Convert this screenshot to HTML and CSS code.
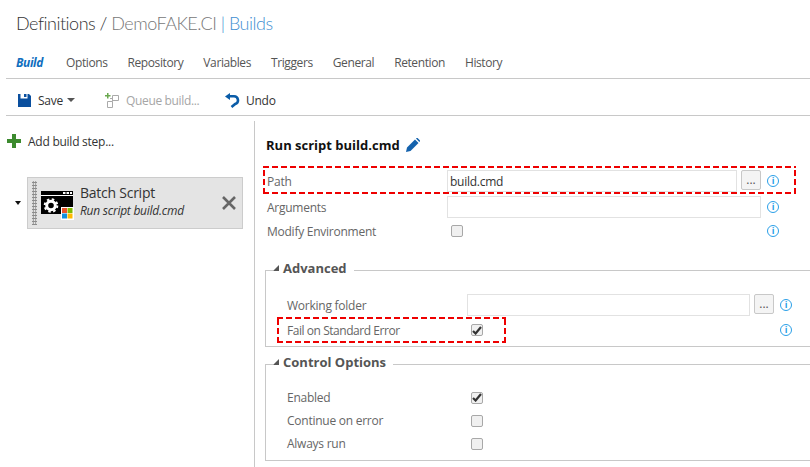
FILE: index.html
```html
<!DOCTYPE html>
<html>
<head>
<meta charset="utf-8">
<title>Builds</title>
<link rel="stylesheet" href="styles.css">
</head>
<body>
<h1 class="title">Definitions / <span class="crumb">DemoFAKE.CI</span> <span class="hub">| Builds</span></h1>
<div class="tabs">
  <a class="tab active">Build</a>
  <a class="tab">Options</a>
  <a class="tab">Repository</a>
  <a class="tab">Variables</a>
  <a class="tab">Triggers</a>
  <a class="tab">General</a>
  <a class="tab">Retention</a>
  <a class="tab">History</a>
</div>
<div class="toolbar">
  <span class="tool save">
    <svg width="13" height="13" viewBox="0 0 13 13"><path fill="#0a4f9e" d="M0 0h2.500v4.500h7V0h1.500L13 2v11H0z"/><path fill="#0a4f9e" d="M6 0h2.500v3H6z"/></svg>
    Save <i class="caret"></i>
  </span>
  <span class="tool queue">
    <svg width="14" height="15" viewBox="0 0 14 15"><path fill="#6aa84f" d="M2 0h1.500v2H5.500v1.500H3.500v2H2v-2H0V2h2z"/><path fill="none" stroke="#aaa" d="M7.500 2.500h6v5h-6zM2.500 8.500h5v6h-5zM5 5.500h2.500v3"/></svg>
    Queue build...
  </span>
  <span class="tool undo">
    <svg width="15" height="15" viewBox="0 0 15 15"><path fill="none" stroke="#0a5ca8" stroke-width="2.600" d="M3.500 3.200h5.500a4 4 0 0 1 1.200 7.800L6.500 14"/><path fill="#0a5ca8" d="M0 3.400L5 0v7z"/></svg>
    Undo
  </span>
</div>
<div class="main">
  <div class="steps">
    <div class="add-step">
      <svg width="14" height="14" viewBox="0 0 14 14"><path fill="#3c8a2e" d="M5 0h4v5h5v4H9v5H5V9H0V5h5z"/></svg>
      Add build step...
    </div>
    <div class="step-row">
      <i class="step-toggle"></i>
      <div class="step">
        <div class="grip"></div>
        <div class="step-icon">
          <svg width="33" height="30" viewBox="0 0 33 30">
            <path fill="#000" d="M0 1h32v23H0z"/>
            <path fill="#fff" d="M0 5h32v1H0zM22 2h2.500v2H22zM25.500 2H28v2h-2.500zM29 2h2v2h-2z"/>
            <circle cx="10" cy="15.500" r="4.300" fill="none" stroke="#fff" stroke-width="3"/>
            <circle cx="10" cy="15.500" r="6.300" fill="none" stroke="#fff" stroke-width="2" stroke-dasharray="2.500 2.450"/>
            <path fill="#fff" d="M20 17h13v13H20z"/>
            <path fill="#e8532b" d="M21 18h5v5h-5z"/>
            <path fill="#7fba00" d="M26.500 18h5v5h-5z"/>
            <path fill="#0f8fe0" d="M21 23.500h5v5h-5z"/>
            <path fill="#fdb900" d="M26.500 23.500h5v5h-5z"/>
          </svg>
        </div>
        <div class="step-text">
          <div class="step-name">Batch Script</div>
          <div class="step-desc">Run script build.cmd</div>
        </div>
        <svg class="step-close" width="14" height="14" viewBox="0 0 14 14"><path stroke="#666" stroke-width="2.600" d="M1 1l12 12M13 1L1 13"/></svg>
      </div>
    </div>
  </div>
  <div class="editor">
    <h2 class="editor-title">Run script build.cmd
      <svg width="14" height="14" viewBox="0 0 14 14"><path fill="#1462ad" d="M0 14l1-4.500L9 1.500 12.500 5l-8 8zM10 .6l.6-.5c.4-.2.9-.2 1.200.1l2 2c.3.3.3.8 0 1.200l-.5.6z"/></svg>
    </h2>
    <div class="row row-path">
      <label class="label">Path</label>
      <input class="text short" value="build.cmd">
      <button class="more">...</button>
      <i class="info">i</i>
    </div>
    <div class="row row-args">
      <label class="label">Arguments</label>
      <input class="text wide">
      <i class="info">i</i>
    </div>
    <div class="row row-env">
      <label class="label">Modify Environment</label>
      <span class="check"></span>
      <i class="info">i</i>
    </div>
    <fieldset class="group group-adv">
      <legend class="group-title"><i class="tri"></i>Advanced</legend>
      <div class="row row-folder">
        <label class="label">Working folder</label>
        <input class="text short folder">
        <button class="more">...</button>
        <i class="info">i</i>
      </div>
      <div class="row row-fail">
        <label class="label">Fail on Standard Error</label>
        <span class="check on"><svg width="10" height="9" viewBox="0 0 10 9"><path fill="none" stroke="#333" stroke-width="2.200" d="M1 5l2.600 2.500L9 1"/></svg></span>
        <i class="info">i</i>
      </div>
    </fieldset>
    <fieldset class="group group-ctl">
      <legend class="group-title"><i class="tri"></i>Control Options</legend>
      <div class="row row-opt">
        <label class="label">Enabled</label>
        <span class="check on"><svg width="10" height="9" viewBox="0 0 10 9"><path fill="none" stroke="#333" stroke-width="2.200" d="M1 5l2.600 2.500L9 1"/></svg></span>
      </div>
      <div class="row row-opt">
        <label class="label">Continue on error</label>
        <span class="check"></span>
      </div>
      <div class="row row-opt">
        <label class="label">Always run</label>
        <span class="check"></span>
      </div>
    </fieldset>
    <div class="callout callout-path"></div>
    <div class="callout callout-fail"></div>
  </div>
</div>
</body>
</html>
```
FILE: styles.css
```css
html, body {margin: 0; height: 467px; overflow: hidden;}
body {background-color: #ffffff; color: #333333; font-family: "Open Sans", sans-serif; font-size: 12px; letter-spacing: -0.25px;}

.title {margin: 0; height: 49px; padding: 10px 0 0 16px; box-sizing: border-box; font-family: Lato, sans-serif; font-size: 18px; font-weight: 300; line-height: 26px; letter-spacing: -0.5px;}
.crumb {color: #777777;}
.hub {color: #3f8fd2;}

.tabs {display: flex; gap: 20px; height: 30px; margin-left: 6px; padding-left: 10px; box-sizing: border-box; border-bottom: 1px solid #c8c8c8; line-height: 27px; color: #555555; letter-spacing: -0.4px;}
.tab.active {width: 30px; color: #106ebe; font-weight: 700; font-style: italic;}

.toolbar {display: flex; height: 37px; margin-left: 6px; padding: 6px 0 0 12px; box-sizing: border-box; border-bottom: 1px solid #c8c8c8; align-items: center; color: #333333;}
.tool {display: flex; align-items: center; gap: 7px;}
.save {width: 87px;}
.queue {width: 120px; color: #a6a6a6; letter-spacing: -0.35px;}
.undo {gap: 6px;}
.caret {width: 0; height: 0; margin-left: -3px; border: 4px solid transparent; border-top: 4px solid #555555; border-bottom: 0;}

.main {display: flex; height: 351px; padding-top: 5px; box-sizing: border-box;}
.steps {width: 254px; flex: none;}
.editor {position: relative; flex: 1; border-left: 1px solid #c8c8c8; padding-left: 12px;}

.add-step {display: flex; align-items: center; gap: 7px; margin: 12px 0 0 7px; height: 16px;}
.step-row {display: flex; align-items: center; margin: 28px 0 0 15px;}
.step-toggle {width: 0; height: 0; margin-right: 6px; border: 3px solid transparent; border-top: 4px solid #111111; border-bottom: 0;}
.step {display: flex; align-items: center; width: 216px; height: 52px; box-sizing: border-box; background-color: #e4e4e4; border: 1px solid #cccccc;}
.grip {width: 5px; height: 44px; margin-left: 4px; background-image: radial-gradient(#8c8c8c 1px, transparent 1px); background-size: 2.500px 3px;}
.step-icon {width: 33px; height: 30px; margin: 4px 0 0 4px;}
.step-text {flex: 1; margin: -2px 0 0 6px;}
.step-name {font-size: 14px; line-height: 18px;}
.step-desc {font-style: italic; line-height: 18px;}
.step-close {margin-right: 6px;}

.editor-title {display: flex; align-items: center; gap: 6px; margin: 0 0 12px -1px; height: 26px; padding-top: 11px; font-size: 13px; line-height: 26px; color: #111111; font-weight: 700; letter-spacing: 0;}

.row {display: flex; align-items: center;}
.label {width: 180px; flex: none; color: #666666;}
.text {height: 22px; box-sizing: border-box; border: 1px solid #e2e2e2; padding: 0 2px; font: inherit; letter-spacing: inherit; color: #333333; outline: 0;}
.short {width: 290px;}
.wide {width: 314px;}
.more {width: 20px; height: 20px; margin-left: 4px; padding: 0; box-sizing: border-box; align-self: flex-start; border: 1px solid #c8c8c8; border-radius: 2px; background-color: #f4f4f4; color: #555555; font: inherit; line-height: 18px;}
.info {width: 12px; height: 12px; margin-left: 6px; box-sizing: border-box; border: 1px solid #2a9fe8; border-radius: 50%; color: #2a9fe8; font-size: 9px; font-style: normal; font-weight: 700; line-height: 10px; text-align: center;}
.check {display: flex; align-items: center; justify-content: center; width: 12px; height: 12px; margin-left: 4px; box-sizing: border-box; border: 1px solid #a8a8a8; border-radius: 2px; background-color: #f0f0f0;}

.row-path {height: 22px;}
.row-args {height: 22px; margin-top: 4px;}
.row-env {height: 22px; margin-top: 2px;}
.row-env .info {margin-left: 304px;}

.group {box-sizing: border-box; min-width: 0; margin: 0 0 0 -2px; padding: 0 0 0 21px; border: 0; border-top: 1px solid #c8c8c8; border-left: 1px solid #c8c8c8; border-bottom: 1px solid #c8c8c8;}
.group-title {display: flex; align-items: center; margin-left: -14px; padding: 0 7px 4px 0; font-size: 13px; font-weight: 700; color: #555555; line-height: 18px; letter-spacing: 0;}
.tri {width: 0; height: 0; margin-right: 4px; border-left: 6px solid transparent; border-bottom: 6px solid #555555;}
.group-adv {height: 88px; margin-top: 17px;}
.group-ctl {height: 108px; margin-top: 6px;}
.folder {width: 283px;}
.row-folder {height: 22px; margin-top: 13px;}
.row-fail {height: 22px; margin-top: 3px;}
.row-fail .label {letter-spacing: -0.45px;}
.row-fail .info {margin-left: 297px;}
.row-opt {height: 23px;}
.row-opt:first-of-type {margin-top: 11px;}

.callout {position: absolute;
  background:
    repeating-linear-gradient(90deg, #ee0000 0 6px, transparent 6px 9px) top / 100% 2px no-repeat,
    repeating-linear-gradient(90deg, #ee0000 0 6px, transparent 6px 9px) bottom / 100% 2px no-repeat,
    repeating-linear-gradient(0deg, #ee0000 0 6px, transparent 6px 9px) left / 2px 100% no-repeat,
    repeating-linear-gradient(0deg, #ee0000 0 6px, transparent 6px 9px) right / 2px 100% no-repeat;}
.callout-path {left: 8px; top: 45px; width: 533px; height: 28px;}
.callout-fail {left: 22px; top: 196px; width: 229px; height: 26px;}
```
